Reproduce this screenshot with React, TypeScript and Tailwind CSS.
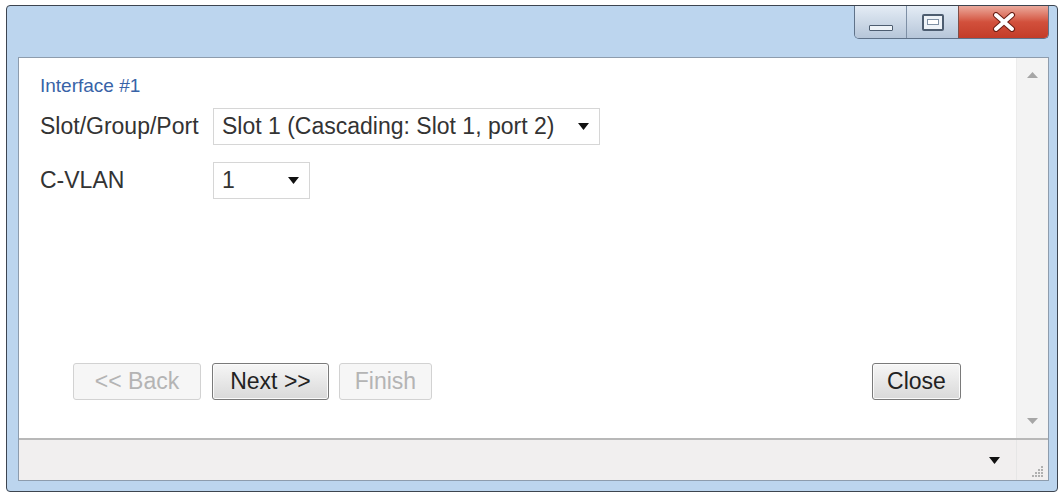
import React from "react";

function Caret({ className = "" }: { className?: string }) {
  return (
    <svg width="11" height="7" viewBox="0 0 11 7" className={className}>
      <path d="M0 0 L11 0 L5.5 7 Z" fill="currentColor" />
    </svg>
  );
}

function Select({ value, width }: { value: string; width: string }) {
  return (
    <div
      className={`${width} h-[37px] flex items-center justify-between pl-[8px] pr-[10px] border border-[#d6d6d6] bg-white text-[#333]`}
    >
      <span>{value}</span>
      <Caret className="text-[#111]" />
    </div>
  );
}

function Btn({
  label,
  disabled,
  width,
}: {
  label: string;
  disabled?: boolean;
  width: string;
}) {
  return disabled ? (
    <button
      className={`${width} h-[37px] rounded-[3px] border border-[#d2d2d2] bg-[#f6f6f6] text-[#b4b4b4]`}
    >
      {label}
    </button>
  ) : (
    <button
      className={`${width} h-[37px] rounded-[3px] border border-[#7a7a7a] bg-gradient-to-b from-[#f6f6f6] to-[#d9d9d9] text-[#222] shadow-[inset_0_0_0_1px_#fbfbfb]`}
    >
      {label}
    </button>
  );
}

export default function App() {
  return (
    <div
      className="w-[1060px] h-[495px] bg-white pl-[6px] pt-[5px] overflow-hidden"
      style={{ fontFamily: '"Liberation Sans", Arial, sans-serif' }}
    >
      <div className="w-[1052px] h-[487px] border border-[#3d4550] rounded-[4px] bg-[#bcd5ee] flex flex-col">
        {/* Title bar */}
        <div className="h-[51px] flex justify-end items-start pr-[8px]">
          <div className="flex h-[33px] rounded-b-[5px] border border-t-0 border-[#5f7289] overflow-hidden">
            <div className="w-[52px] flex items-center justify-center bg-gradient-to-b from-[#e4ecf5] to-[#b6c6d9] border-r border-[#7d8fa5]">
              <div className="w-[24px] h-[6px] mt-[12px] bg-[#eef3f8] border border-[#4d5d70] rounded-[1px]" />
            </div>
            <div className="w-[52px] flex items-center justify-center bg-gradient-to-b from-[#e4ecf5] to-[#b6c6d9] border-r border-[#7d4f48]">
              <div className="w-[22px] h-[17px] border-[2px] border-[#4d5d70] rounded-[2px] bg-[#eef3f8] flex items-center justify-center">
                <div className="w-[12px] h-[6px] border border-[#7f90a4] bg-white" />
              </div>
            </div>
            <div className="w-[89px] flex items-center justify-center bg-gradient-to-b from-[#eaa99c] via-[#d2503c] to-[#c33c28]">
              <svg width="24" height="20" viewBox="0 0 24 20">
                <path
                  d="M4 3 L20 17 M20 3 L4 17"
                  stroke="#6b1e14"
                  strokeWidth="6"
                  strokeLinecap="round"
                />
                <path
                  d="M4 3 L20 17 M20 3 L4 17"
                  stroke="#ffffff"
                  strokeWidth="4"
                  strokeLinecap="round"
                />
              </svg>
            </div>
          </div>
        </div>

        {/* Client area */}
        <div className="flex-1 ml-[11px] mr-[8px] mb-[10px] border border-[#8d9cad] bg-white flex flex-col">
          <div className="flex-1 flex">
            <div className="flex-1 flex flex-col pl-[21px] pt-[17px] text-[23px] text-[#333]">
              <div className="text-[19px] leading-[22px] text-[#3863a7]">
                Interface #1
              </div>
              <div className="mt-[11px] flex items-center">
                <div className="w-[173px]">Slot/Group/Port</div>
                <Select
                  value="Slot 1 (Cascading: Slot 1, port 2)"
                  width="w-[387px]"
                />
              </div>
              <div className="mt-[17px] flex items-center">
                <div className="w-[173px]">C-VLAN</div>
                <Select value="1" width="w-[97px]" />
              </div>
              <div className="mt-[164px] flex items-center pl-[33px] pr-[55px]">
                <Btn label="<< Back" disabled width="w-[128px]" />
                <div className="ml-[11px]">
                  <Btn label="Next >>" width="w-[117px]" />
                </div>
                <div className="ml-[10px]">
                  <Btn label="Finish" disabled width="w-[93px]" />
                </div>
                <div className="ml-auto">
                  <Btn label="Close" width="w-[89px]" />
                </div>
              </div>
            </div>
            {/* Scrollbar */}
            <div className="w-[32px] bg-[#f3f3f3] border-l border-[#ececec] flex flex-col items-center justify-between pt-[14px] pb-[14px]">
              <svg width="11" height="6" viewBox="0 0 11 6">
                <path d="M5.5 0 L11 6 L0 6 Z" fill="#a6a6a6" />
              </svg>
              <svg width="11" height="6" viewBox="0 0 11 6">
                <path d="M0 0 L11 0 L5.5 6 Z" fill="#a6a6a6" />
              </svg>
            </div>
          </div>
          {/* Status bar */}
          <div className="h-[42px] border-t-[2px] border-[#b8b8b8] bg-[#f1efef] flex">
            <div className="flex-1 flex items-center justify-end pr-[16px]">
              <Caret className="text-[#111]" />
            </div>
            <div className="w-[32px] border-l border-[#e6e6e6] flex items-end justify-end pr-[4px] pb-[3px]">
              <svg width="12" height="12" viewBox="0 0 12 12">
                <g fill="#b0b0b0">
                  <rect x="9" y="1" width="2" height="2" />
                  <rect x="6" y="4" width="2" height="2" />
                  <rect x="9" y="4" width="2" height="2" />
                  <rect x="3" y="7" width="2" height="2" />
                  <rect x="6" y="7" width="2" height="2" />
                  <rect x="9" y="7" width="2" height="2" />
                  <rect x="0" y="10" width="2" height="2" />
                  <rect x="3" y="10" width="2" height="2" />
                  <rect x="6" y="10" width="2" height="2" />
                  <rect x="9" y="10" width="2" height="2" />
                </g>
              </svg>
            </div>
          </div>
        </div>
      </div>
    </div>
  );
}
